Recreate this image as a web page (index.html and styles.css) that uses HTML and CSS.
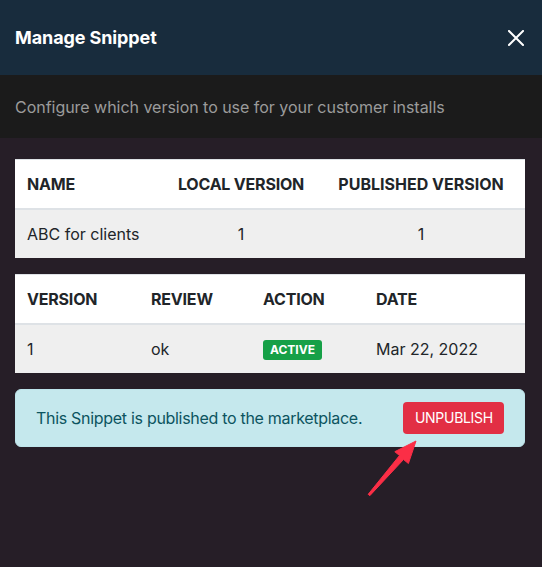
FILE: index.html
```html
<!DOCTYPE html>
<html lang="en">
<head>
<meta charset="utf-8">
<title>Manage Snippet</title>
<link rel="stylesheet" href="styles.css">
</head>
<body>
<div class="modal">
  <header class="modal-header">
    <h1 class="modal-title">Manage Snippet</h1>
    <button class="close" aria-label="Close">
      <svg width="16" height="16" viewBox="0 0 16 16"><path d="M1 1 L15 15 M15 1 L1 15" stroke="#ffffff" stroke-width="2" stroke-linecap="square" fill="none"/></svg>
    </button>
  </header>
  <div class="modal-sub">Configure which version to use for your customer installs</div>
  <main class="modal-body">
    <table class="tbl tbl-snippet">
      <thead>
        <tr><th class="c-name">NAME</th><th class="c-local center">LOCAL VERSION</th><th class="c-pub center">PUBLISHED VERSION</th></tr>
      </thead>
      <tbody>
        <tr><td>ABC for clients</td><td class="center">1</td><td class="center">1</td></tr>
      </tbody>
    </table>
    <table class="tbl tbl-versions">
      <thead>
        <tr><th class="c-ver">VERSION</th><th class="c-rev">REVIEW</th><th class="c-act">ACTION</th><th>DATE</th></tr>
      </thead>
      <tbody>
        <tr><td>1</td><td>ok</td><td><span class="badge">ACTIVE</span></td><td>Mar 22, 2022</td></tr>
      </tbody>
    </table>
    <div class="alert">
      <span class="alert-text">This Snippet is published to the marketplace.</span>
      <button class="btn-danger">UNPUBLISH</button>
    </div>
  </main>
</div>
<svg class="annotation" width="542" height="567" viewBox="0 0 542 567">
  <polygon points="416,441 408.4,463.5 403.5,459.5 369.8,495.7 368.2,494.3 399.5,455.5 394.8,451.7" fill="#fb2e46" stroke="#fb2e46" stroke-width="1" stroke-linejoin="round"/>
</svg>
</body>
</html>
```
FILE: styles.css
```css
* { box-sizing: border-box; }
html, body {
  margin: 0;
  padding: 0;
  height: 100%;
}
body {
  background: #261e27;
  font-family: "Inter", "Noto Sans", sans-serif;
  color: #212529;
  position: relative;
  overflow: hidden;
}
.modal {
  width: 542px;
  min-height: 567px;
  background: #261e27;
}
.modal-header {
  height: 75px;
  background: #182c3d;
  display: flex;
  align-items: center;
  justify-content: space-between;
  padding: 0 18px 0 15px;
}
.modal-title {
  margin: 0;
  font-size: 18px;
  font-weight: 700;
  line-height: 27px;
  letter-spacing: -0.1px;
  color: #ffffff;
}
.close {
  background: none;
  border: 0;
  padding: 0;
  width: 16px;
  height: 16px;
  display: flex;
  cursor: pointer;
}
.modal-sub {
  background: #1b1b1b;
  color: #9b9b9b;
  font-size: 16px;
  line-height: 24px;
  letter-spacing: -0.03px;
  padding: 20px 15px 19px;
}
.modal-body {
  padding: 21px 17px 0 15px;
  display: flex;
  flex-direction: column;
  gap: 16px;
}
.tbl {
  width: 100%;
  border-collapse: collapse;
  font-size: 16px;
  line-height: 24px;
  table-layout: fixed;
}
.tbl th, .tbl td {
  padding: 12px;
  text-align: left;
  border-top: 1px solid #dee2e6;
  white-space: nowrap;
}
.tbl th {
  background: #ffffff;
  font-weight: 700;
  letter-spacing: -0.2px;
  border-bottom: 2px solid #dee2e6;
}
.tbl td {
  background: #efefef;
  font-weight: 400;
}
.tbl .center { text-align: center; }
.tbl-snippet .c-pub { letter-spacing: 0; }
.c-name { width: 150px; }
.c-local { width: 152px; }
.c-ver { width: 124px; }
.c-rev { width: 112px; }
.c-act { width: 113px; }
.badge {
  display: inline-block;
  background: #16a047;
  color: #ffffff;
  font-size: 12px;
  font-weight: 700;
  line-height: 20px;
  padding: 0 7px;
  border-radius: 3px;
  vertical-align: 1px;
}
.alert {
  display: flex;
  align-items: center;
  justify-content: space-between;
  background: #c5e8ed;
  border: 1px solid #bee5eb;
  border-radius: 6px;
  padding: 12px 20px;
  color: #0c5460;
}
.alert-text {
  font-size: 16px;
  line-height: 24px;
  letter-spacing: -0.3px;
}
.btn-danger {
  background: #e22f44;
  color: #ffffff;
  border: 0;
  border-radius: 4px;
  font-family: "Inter", "Noto Sans", sans-serif;
  font-size: 14px;
  letter-spacing: -0.3px;
  line-height: 22px;
  padding: 5px 12px;
  width: 101px;
  height: 32px;
}
.annotation {
  position: absolute;
  left: 0;
  top: 0;
  pointer-events: none;
}
```
